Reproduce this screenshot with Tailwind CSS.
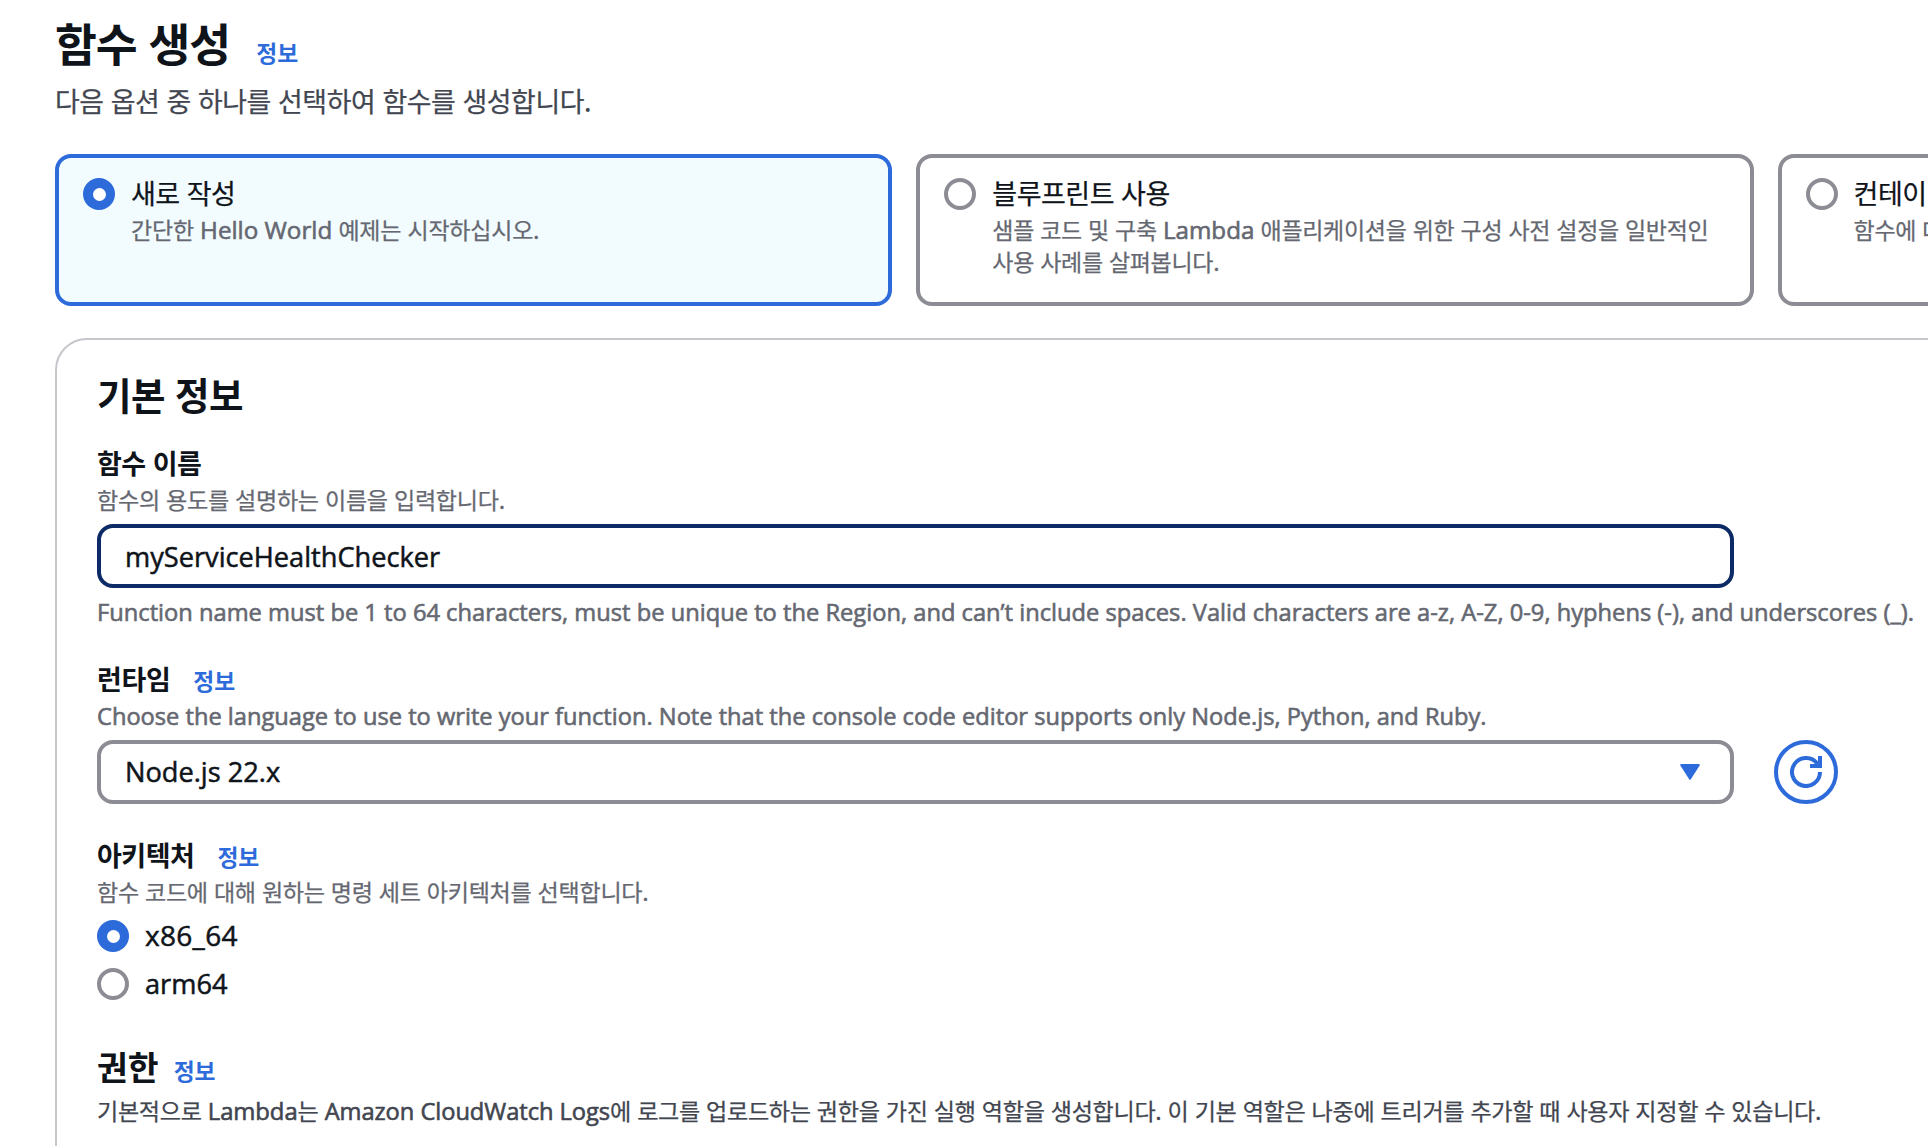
<!DOCTYPE html>
<html lang="ko">
<head>
    <meta charset="UTF-8">
    <meta name="viewport" content="width=device-width, initial-scale=1.0">
    <title>함수 생성 - Lambda</title>
    <script src="https://cdn.jsdelivr.net/npm/@tailwindcss/browser@4"></script>
</head>
<body class="h-[1146px] overflow-hidden bg-white font-['Noto_Sans_CJK_KR','Open_Sans',sans-serif] text-[#0f141a]">

    <main class="h-[1146px] overflow-hidden pl-[55px] pt-3">

        <!-- Page header -->
        <header>
            <div class="flex items-baseline h-[60px]">
                <h1 class="text-[45.5px] leading-[60px] font-bold tracking-[-1px]">함수 생성</h1>
                <a href="#" class="ml-[26px] text-[22.8px] leading-none font-bold text-[#2d6bdb]">정보</a>
            </div>
            <p class="mt-[9px] text-[26.9px] leading-[40px] tracking-[-0.42px] text-[#424650] [-webkit-text-stroke:0.25px]">다음 옵션 중 하나를 선택하여 함수를 생성합니다.</p>
        </header>

        <!-- Creation options -->
        <div class="mt-[33px] flex gap-6">
            <label class="flex w-[837.3px] h-[152px] shrink-0 gap-4 rounded-[16px] border-4 border-[#2d6bdb] bg-[#f2fcff] pl-6">
                <span class="mt-5 flex size-8 shrink-0 items-center justify-center rounded-full bg-[#2d6bdb]">
                    <span class="size-[13px] rounded-full bg-white"></span>
                </span>
                <span class="pt-[15px]">
                    <span class="block text-[27px] leading-[40px] tracking-[-0.5px] [-webkit-text-stroke:0.25px]">새로 작성</span>
                    <span class="block text-[23px] leading-8 tracking-[-0.22px] text-[#656871] whitespace-nowrap [-webkit-text-stroke:0.25px]">간단한 <span class="font-['Open_Sans'] text-[24.2px] leading-none tracking-normal [-webkit-text-stroke:0.6px]">Hello World</span> 예제는 시작하십시오.</span>
                </span>
            </label>

            <label class="flex w-[837.3px] h-[152px] shrink-0 gap-4 rounded-[16px] border-4 border-[#8c8c94] pl-6">
                <span class="mt-5 size-8 shrink-0 rounded-full border-4 border-[#8c8c94]"></span>
                <span class="pt-[15px]">
                    <span class="block text-[27px] leading-[40px] tracking-[-0.5px] [-webkit-text-stroke:0.25px]">블루프린트 사용</span>
                    <span class="block text-[23px] leading-8 tracking-[-0.3px] text-[#656871] whitespace-nowrap [-webkit-text-stroke:0.25px]">샘플 코드 및 구축 <span class="font-['Open_Sans'] text-[24.2px] leading-none tracking-normal [-webkit-text-stroke:0.6px]">Lambda</span> 애플리케이션을 위한 구성 사전 설정을 일반적인<br>사용 사례를 살펴봅니다.</span>
                </span>
            </label>

            <label class="flex w-[837.3px] h-[152px] shrink-0 gap-4 rounded-[16px] border-4 border-[#8c8c94] pl-6">
                <span class="mt-5 size-8 shrink-0 rounded-full border-4 border-[#8c8c94]"></span>
                <span class="pt-[15px]">
                    <span class="block text-[27px] leading-[40px] tracking-[-0.5px] [-webkit-text-stroke:0.25px]">컨테이너 이미지</span>
                    <span class="block text-[23px] leading-8 tracking-[-0.3px] text-[#656871] whitespace-nowrap [-webkit-text-stroke:0.25px]">함수에 대해 배포할 컨테이너 이미지를 선택합니다.</span>
                </span>
            </label>
        </div>

        <!-- Basic information -->
        <section class="mt-8 h-[900px] w-[2560px] rounded-[32px] border-2 border-[#c6c6cd] pl-10 pt-[30px]">
            <h2 class="text-[37.5px] leading-[48px] font-bold tracking-[-0.5px]">기본 정보</h2>

            <div class="mt-[25px]">
                <h3 class="text-[27px] leading-[40px] font-bold tracking-[-0.5px]">함수 이름</h3>
                <p class="text-[23.1px] leading-8 tracking-[-0.3px] text-[#656871] [-webkit-text-stroke:0.25px]">함수의 용도를 설명하는 이름을 입력합니다.</p>
                <div class="mt-[9px] h-16 w-[1637px] rounded-[16px] border-4 border-[#0b2a66] pl-6 pt-px font-['Open_Sans'] text-[27.2px] leading-[56px] [-webkit-text-stroke:0.5px]">myServiceHealthChecker</div>
                <p class="mt-2 font-['Open_Sans'] text-[23.7px] leading-8 text-[#656871] whitespace-nowrap [-webkit-text-stroke:0.6px]">Function name must be 1 to 64 characters, must be unique to the Region, and can’t include spaces. Valid characters are a-z, A-Z, 0-9, hyphens (-), and underscores (_).</p>
            </div>

            <div class="mt-[31px]">
                <div class="flex items-baseline h-[40px]">
                    <h3 class="text-[27px] leading-[40px] font-bold tracking-[-0.4px]">런타임</h3>
                    <a href="#" class="ml-[23px] text-[22.8px] leading-none font-bold text-[#2d6bdb]">정보</a>
                </div>
                <p class="mt-px font-['Open_Sans'] text-[23.65px] leading-8 text-[#656871] whitespace-nowrap [-webkit-text-stroke:0.6px]">Choose the language to use to write your function. Note that the console code editor supports only Node.js, Python, and Ruby.</p>
                <div class="mt-2 flex gap-10">
                    <div class="flex h-16 w-[1637px] items-center justify-between rounded-[16px] border-4 border-[#8c8c94] pl-6 pr-[30px]">
                        <span class="font-['Open_Sans'] text-[27.2px] leading-[56px] [-webkit-text-stroke:0.5px]">Node.js 22.x</span>
                        <svg class="h-4 w-5" viewBox="0 0 20 16" fill="#2d6bdb" stroke="#2d6bdb" stroke-width="2" stroke-linejoin="round">
                            <path d="M1.2 1h17.6L10 14.8z"/>
                        </svg>
                    </div>
                    <button class="flex size-16 items-center justify-center rounded-full border-4 border-[#2d6bdb]">
                        <svg class="size-8" viewBox="0 0 32 32" fill="none" stroke="#2d6bdb" stroke-width="4">
                            <path d="M30 16A14 14 0 1 1 27.5 8M20 10h10V0"/>
                        </svg>
                    </button>
                </div>
            </div>

            <div class="mt-[31px]">
                <div class="flex items-baseline h-[40px]">
                    <h3 class="text-[27px] leading-[40px] font-bold tracking-[-0.5px]">아키텍처</h3>
                    <a href="#" class="ml-[23px] text-[22.8px] leading-none font-bold text-[#2d6bdb]">정보</a>
                </div>
                <p class="text-[23.1px] leading-8 tracking-[-0.32px] text-[#656871] [-webkit-text-stroke:0.25px]">함수 코드에 대해 원하는 명령 세트 아키텍처를 선택합니다.</p>
                <div class="mt-[13px] flex flex-col gap-4">
                    <label class="flex h-8 gap-4">
                        <span class="flex size-8 items-center justify-center rounded-full bg-[#2d6bdb]">
                            <span class="size-[13px] rounded-full bg-white"></span>
                        </span>
                        <span class="font-['Open_Sans'] text-[28px] leading-[31px] tracking-[0.3px] [-webkit-text-stroke:0.5px]">x86_64</span>
                    </label>
                    <label class="flex h-8 gap-4">
                        <span class="size-8 rounded-full border-4 border-[#8c8c94]"></span>
                        <span class="font-['Open_Sans'] text-[27.2px] leading-[32px] [-webkit-text-stroke:0.5px]">arm64</span>
                    </label>
                </div>
            </div>

            <div class="mt-[44px]">
                <div class="flex items-baseline h-11">
                    <h2 class="text-[33.5px] leading-[44px] font-bold">권한</h2>
                    <a href="#" class="ml-[15px] text-[22.8px] leading-none font-bold text-[#2d6bdb]">정보</a>
                </div>
                <p class="mt-[6px] text-[23.1px] leading-8 tracking-[-0.32px] text-[#424650] whitespace-nowrap [-webkit-text-stroke:0.25px]">기본적으로 <span class="font-['Open_Sans'] text-[23.9px] leading-none tracking-[-0.1px] [-webkit-text-stroke:0.6px]">Lambda</span>는 <span class="font-['Open_Sans'] text-[23.7px] leading-none tracking-[-0.05px] [-webkit-text-stroke:0.6px]">Amazon CloudWatch Logs</span>에 로그를 업로드하는 권한을 가진 실행 역할을 생성합니다. 이 기본 역할은 나중에 트리거를 추가할 때 사용자 지정할 수 있습니다.</p>
            </div>
        </section>
    </main>

</body>
</html>
